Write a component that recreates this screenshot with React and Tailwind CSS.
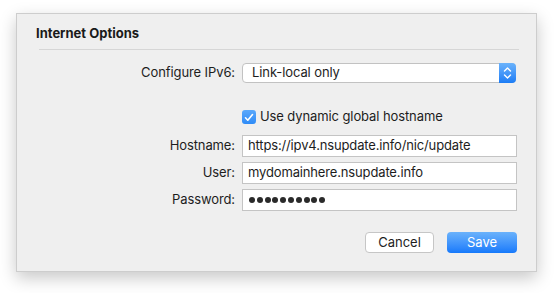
import React from "react";

const font = { fontFamily: "Inter, 'Liberation Sans', sans-serif" };

const Field = ({ label, children }) => (
  <div className="flex items-center h-[22px]">
    <label className="w-[219px] pr-[1px] text-right text-[13px] tracking-[-0.1px] text-[#1d1d1d]">{label}</label>
    <div className="ml-[6px] w-[275px] h-[22px] bg-white border border-[#c4c4c4] flex items-center px-[5px] text-[13px] tracking-[-0.15px] text-[#1d1d1d]">
      {children}
    </div>
  </div>
);

export default function App() {
  return (
    <div className="w-[554px] h-[293px] bg-white pl-[16px] pt-[13px]" style={font}>
      <div className="w-[521px] h-[259px] bg-[#efefef] border border-[#cdcdcd] shadow-[0_6px_16px_rgba(0,0,0,0.22)] flex flex-col">
        <div className="pl-[19px] pt-[11px] text-[13px] font-bold text-[#1a1a1a] leading-[16px]">
          Internet Options
        </div>
        <div className="ml-[22px] mr-[17px] mt-[8px] h-px bg-[#d6d6d6]" />

        {/* configure row */}
        <div className="flex items-center mt-[13px] h-[20px]">
          <label className="w-[219px] pr-[1px] text-right text-[13px] tracking-[-0.1px] text-[#1d1d1d]">Configure IPv6:</label>
          <div className="ml-[6px] w-[274px] h-[20px] bg-white border border-[#c2c2c2] rounded-[4px] flex items-center relative">
            <span className="pl-[9px] text-[13px] tracking-[-0.1px] text-[#1d1d1d]">Link-local only</span>
            <div className="absolute -right-px -top-px h-[20px] w-[17px] rounded-r-[4px] bg-gradient-to-b from-[#6ab2fb] to-[#1a7cf5] flex items-center justify-center">
              <svg width="9" height="14" viewBox="0 0 9 14" fill="none" stroke="white" strokeWidth="1.4" strokeLinecap="round" strokeLinejoin="round">
                <path d="M1.5 5 L4.5 2 L7.5 5" />
                <path d="M1.5 9 L4.5 12 L7.5 9" />
              </svg>
            </div>
          </div>
        </div>

        {/* checkbox row */}
        <div className="flex items-center mt-[26px] h-[16px]">
          <div className="ml-[225px] w-[14px] h-[14px] rounded-[3px] bg-gradient-to-b from-[#5aa8fb] to-[#2d8bf7] flex items-center justify-center">
            <svg width="10" height="9" viewBox="0 0 10 9" fill="none" stroke="white" strokeWidth="1.6" strokeLinecap="round" strokeLinejoin="round">
              <path d="M1.5 4.8 L3.8 7.2 L8.5 1.5" />
            </svg>
          </div>
          <span className="ml-[4px] text-[13px] tracking-[-0.1px] text-[#1d1d1d]">Use dynamic global hostname</span>
        </div>

        <div className="flex flex-col gap-[5px] mt-[10px]">
          <Field label="Hostname:">https://ipv4.nsupdate.info/nic/update</Field>
          <Field label="User:">mydomainhere.nsupdate.info</Field>
          <Field label="Password:">
            <span className="flex gap-[1.8px] pl-[1px]">
              {Array.from({ length: 10 }).map((_, i) => (
                <span key={i} className="w-[6px] h-[6px] rounded-full bg-[#2a2a2a]" />
              ))}
            </span>
          </Field>
        </div>

        <div className="flex justify-end gap-[13px] mr-[19px] mt-[21px]">
          <button className="w-[69px] h-[21px] bg-white border border-[#c6c6c6] rounded-[4px] text-[13px] text-[#1d1d1d] leading-none">
            Cancel
          </button>
          <button className="w-[70px] h-[21px] rounded-[4px] bg-gradient-to-b from-[#6ab2fb] to-[#1479fb] text-[13px] text-white leading-none">
            Save
          </button>
        </div>
      </div>
    </div>
  );
}
